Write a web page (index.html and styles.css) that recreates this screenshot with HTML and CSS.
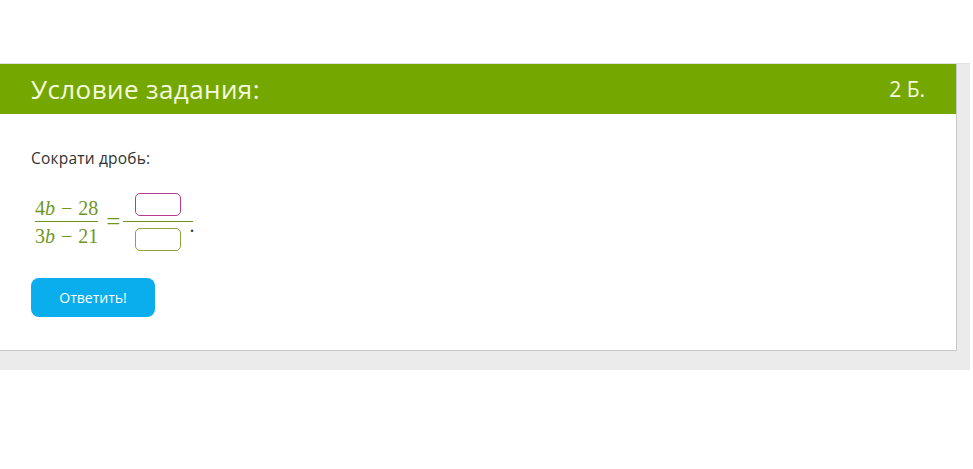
FILE: index.html
```html
<!DOCTYPE html>
<html>
<head>
  <title>Условие задания</title>
  <link rel="stylesheet" href="styles.css">
</head>
<body>
  <div class="task-wrap">
    <div class="task-card">
      <div class="task-header">
        <span class="task-title">Условие задания:</span>
        <span class="task-points">2 Б.</span>
      </div>
      <div class="task-body">
        <p class="task-text">Сократи дробь:</p>
        <div class="task-math">
          <span class="frac">
            <span class="frac-num">4<i>b</i><span class="op">−</span>28</span>
            <span class="frac-den">3<i>b</i><span class="op">−</span>21</span>
          </span>
          <span class="eq">=</span>
          <span class="frac frac-inputs">
            <span class="frac-num"><input class="ans ans-top" type="text"></span>
            <span class="frac-den"><input class="ans ans-bottom" type="text"></span>
          </span>
          <span class="dot">.</span>
        </div>
        <button class="answer-btn">Ответить!</button>
      </div>
    </div>
  </div>
</body>
</html>
```
FILE: styles.css
```css
body {
  margin: 0;
  padding: 0;
  background-color: #fff;
  font-family: "Open Sans", "DejaVu Sans", sans-serif;
}

.task-wrap {
  margin-top: 63px;
  width: 970px;
  background-color: #ebebeb; /* grey frame around the card */
  border-top: 1px solid #e0e0e0;
  padding-bottom: 19px;
}

.task-card {
  width: 956px;
  background-color: #fff;
  border-right: 1px solid #c8c8c8;
  border-bottom: 1px solid #c8c8c8;
}

.task-header {
  display: flex;
  justify-content: space-between;
  align-items: center;
  height: 50px;
  padding: 0 31px;
  background-color: #74a800;
  color: #f6fadf;
}

.task-title {
  font-size: 26px;
  letter-spacing: 0.4px;
}

.task-points {
  font-size: 21px;
}

.task-body {
  padding: 34px 31px 33px;
}

.task-text {
  margin: 0;
  font-size: 15.5px;
  line-height: 20px;
  color: #333;
  letter-spacing: 0.2px;
}

.task-math {
  display: flex;
  align-items: center;
  margin-top: 25px;
  padding-left: 2px;
  font-family: "Liberation Serif", "DejaVu Serif", serif;
  font-size: 20px;
  color: #6f961f;
}

.frac {
  display: inline-flex;
  flex-direction: column;
  align-items: center;
  padding: 0 2px;
}

.frac-num {
  padding-bottom: 2px;
  border-bottom: 1px solid #6f961f;
  width: 100%;
  text-align: center;
  line-height: 22px;
}

.frac-den {
  padding-top: 3px;
  line-height: 22px;
}

.frac-num, .frac-den {
  white-space: nowrap;
}

.op {
  margin: 0 6px;
}

.eq {
  margin: 0 7px 0 6px;
  font-size: 25px;
}

.frac-inputs .frac-num {
  padding: 0 6px 5px;
  line-height: 0;
}

.frac-inputs .frac-den {
  padding-top: 6px;
  line-height: 0;
}

.ans {
  width: 46px;
  height: 23px;
  box-sizing: border-box;
  margin: 0;
  border-radius: 5px;
  background-color: #fff;
  outline: none;
}

.ans-top {
  border: 1px solid #b23b8e;
}

.ans-bottom {
  border: 1px solid #8aa53a;
}

.dot {
  color: #333;
  margin-top: 6px;
}

.answer-btn {
  display: block;
  margin-top: 27px;
  width: 124px;
  height: 39px;
  border: none;
  border-radius: 8px;
  background-color: #0aaeec;
  color: #fff;
  font-family: "Open Sans", "DejaVu Sans", sans-serif;
  font-size: 14px;
  cursor: pointer;
}
```
